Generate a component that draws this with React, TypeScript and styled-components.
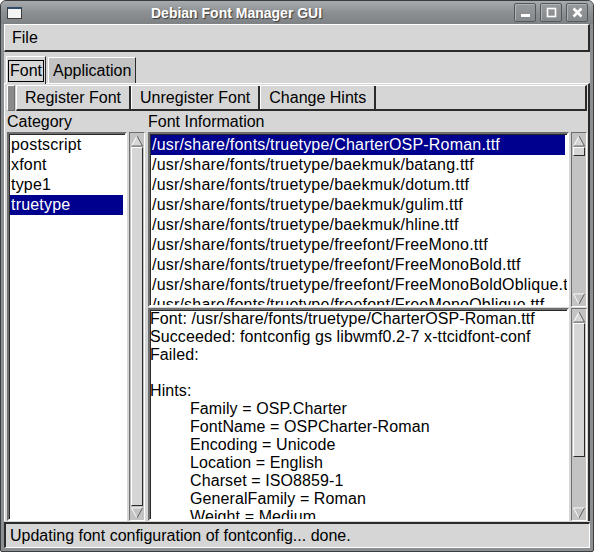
import React from "react";
import styled, { createGlobalStyle } from "styled-components";

const GlobalStyle = createGlobalStyle`
  html, body {
    margin: 0;
    padding: 0;
    background: #ffffff;
  }
  * {
    box-sizing: border-box;
  }
`;

const BG = "#d6d6d6";
const TROUGH = "#c3c3c3";
const SELECT = "#00008f";
const LIGHT = "#ffffff";
const DARK = "#6e6e6e";
const BLACK = "#2a2a2a";

const categories = ["postscript", "xfont", "type1", "truetype"];

const fonts = [
  "/usr/share/fonts/truetype/CharterOSP-Roman.ttf",
  "/usr/share/fonts/truetype/baekmuk/batang.ttf",
  "/usr/share/fonts/truetype/baekmuk/dotum.ttf",
  "/usr/share/fonts/truetype/baekmuk/gulim.ttf",
  "/usr/share/fonts/truetype/baekmuk/hline.ttf",
  "/usr/share/fonts/truetype/freefont/FreeMono.ttf",
  "/usr/share/fonts/truetype/freefont/FreeMonoBold.ttf",
  "/usr/share/fonts/truetype/freefont/FreeMonoBoldOblique.ttf",
  "/usr/share/fonts/truetype/freefont/FreeMonoOblique.ttf",
];

const infoLines: { text: string; indent?: boolean }[] = [
  { text: "Font: /usr/share/fonts/truetype/CharterOSP-Roman.ttf" },
  { text: "Succeeded: fontconfig gs libwmf0.2-7 x-ttcidfont-conf" },
  { text: "Failed:" },
  { text: "" },
  { text: "Hints:" },
  { text: "Family = OSP.Charter", indent: true },
  { text: "FontName = OSPCharter-Roman", indent: true },
  { text: "Encoding = Unicode", indent: true },
  { text: "Location = English", indent: true },
  { text: "Charset = ISO8859-1", indent: true },
  { text: "GeneralFamily = Roman", indent: true },
  { text: "Weight = Medium", indent: true },
];

export default function App() {
  return (
    <>
      <GlobalStyle />
      <Window>
        <TitleBar>
          <WinIcon />
          <Title>Debian Font Manager GUI</Title>
          <TitleButtons>
            <TitleButton>
              <svg width="11" height="11" viewBox="0 0 11 11">
                <rect x="1" y="7" width="9" height="3" fill="#fff" />
              </svg>
            </TitleButton>
            <TitleButton>
              <svg width="11" height="11" viewBox="0 0 11 11">
                <rect x="1.5" y="1.5" width="8" height="8" fill="none" stroke="#fff" strokeWidth="1.6" />
              </svg>
            </TitleButton>
            <TitleButton>
              <svg width="11" height="11" viewBox="0 0 11 11">
                <path d="M1.5 1.5 L9.5 9.5 M9.5 1.5 L1.5 9.5" stroke="#fff" strokeWidth="2.6" />
              </svg>
            </TitleButton>
          </TitleButtons>
        </TitleBar>

        <Client>
          <MenuBar>
            <MenuItem>File</MenuItem>
          </MenuBar>

          <TabRow>
            <Tab $active>
              <TabFocus>Font</TabFocus>
            </Tab>
            <Tab>Application</Tab>
          </TabRow>

          <Panel>
            <Toolbar>
              <Handle />
              <ToolFrame>
                <ToolButton>Register Font</ToolButton>
                <ToolButton>Unregister Font</ToolButton>
                <ToolButton>Change Hints</ToolButton>
              </ToolFrame>
            </Toolbar>

            <Columns>
              <CategoryCol>
                <Label>Category</Label>
                <ListBox>
                  {categories.map((c) => (
                    <Row key={c} $selected={c === "truetype"}>
                      {c}
                    </Row>
                  ))}
                </ListBox>
              </CategoryCol>

              <ScrollCol>
                <Label>&nbsp;</Label>
                <ScrollFill>
                  <Scrollbar before={0} thumb={360} after={0} />
                </ScrollFill>
              </ScrollCol>

              <InfoCol>
                <Label>Font Information</Label>
                <ListPane>
                  <ListBox>
                    {fonts.map((f, i) => (
                      <Row key={f} $selected={i === 0}>
                        {f}
                      </Row>
                    ))}
                  </ListBox>
                  <Scrollbar before={0} thumb={7} after={140} />
                </ListPane>
                <TextPane>
                  <TextBox>
                    {infoLines.map((l, i) => (
                      <TextLine key={i} $indent={l.indent}>
                        {l.text || "\u00a0"}
                      </TextLine>
                    ))}
                  </TextBox>
                  <Scrollbar before={0} thumb={133} after={50} />
                </TextPane>
              </InfoCol>
            </Columns>
          </Panel>

          <StatusBar>Updating font configuration of fontconfig... done.</StatusBar>
        </Client>
      </Window>
    </>
  );
}

function Scrollbar({ before, thumb, after }: { before: number; thumb: number; after: number }) {
  return (
    <ScrollTrack>
      <Arrow>
        <svg width="13" height="12" viewBox="0 0 13 12">
          <path d="M6.5 0.5 L0.5 11.5 L12.5 11.5 Z" fill={BG} />
          <path d="M6.5 0.5 L0.5 11.5" stroke="#fff" fill="none" />
          <path d="M6.5 0.5 L12.5 11.5 M0.5 11.5 L12.5 11.5" stroke="#555" fill="none" />
        </svg>
      </Arrow>
      <Trough>
        <Gap $size={before} />
        <Thumb $size={thumb} />
        <Gap $size={after} />
      </Trough>
      <Arrow>
        <svg width="13" height="12" viewBox="0 0 13 12">
          <path d="M0.5 0.5 L12.5 0.5 L6.5 11.5 Z" fill={TROUGH} />
          <path d="M0.5 0.5 L12.5 0.5 M0.5 0.5 L6.5 11.5" stroke="#fff" fill="none" />
          <path d="M12.5 0.5 L6.5 11.5" stroke="#555" fill="none" />
        </svg>
      </Arrow>
    </ScrollTrack>
  );
}

const Window = styled.div`
  width: 594px;
  height: 552px;
  display: flex;
  flex-direction: column;
  background: #8c8f92;
  border: 1px solid #3a3c3e;
  border-radius: 6px 6px 2px 2px;
  overflow: hidden;
  font-family: "Liberation Sans", Arial, sans-serif;
  font-size: 16px;
  color: #000;
`;

const TitleBar = styled.div`
  height: 23px;
  display: flex;
  align-items: center;
  padding: 0 5px 0 6px;
  background: linear-gradient(#a8abae, #8d9093 50%, #7f8285);
`;

const WinIcon = styled.div`
  width: 15px;
  height: 12px;
  background: #f4f4f4;
  border: 1px solid #3c3c3c;
  border-top: 2px solid #2f4a6a;
`;

const Title = styled.div`
  flex: 1;
  padding-left: 129px;
  font-family: "Liberation Sans", Arial, sans-serif;
  font-weight: bold;
  font-size: 14px;
  color: #ffffff;
  text-shadow: 1px 1px 1px #3a3a3a;
`;

const TitleButtons = styled.div`
  display: flex;
  gap: 4px;
`;

const TitleButton = styled.div`
  width: 22px;
  height: 19px;
  display: flex;
  align-items: center;
  justify-content: center;
  border: 1px solid #55585b;
  border-radius: 2px;
  box-shadow: inset 1px 1px 0 #b0b3b6;
  background: linear-gradient(#979a9d, #86898c);
`;

const Client = styled.div`
  flex: 1;
  display: flex;
  flex-direction: column;
  background: ${BG};
  margin: 0 3px 3px;
  min-height: 0;
`;

const MenuBar = styled.div`
  height: 28px;
  display: flex;
  align-items: center;
  padding-left: 7px;
  border-top: 1px solid ${LIGHT};
  border-left: 1px solid ${LIGHT};
  border-bottom: 2px solid ${BLACK};
  border-right: 2px solid ${BLACK};
`;

const MenuItem = styled.span`
  padding-top: 1px;
`;

const TabRow = styled.div`
  display: flex;
  padding: 2px 0 0 2px;
  gap: 2px;
  height: 31px;
  align-items: flex-end;
`;

const Tab = styled.div<{ $active?: boolean }>`
  height: ${(p) => (p.$active ? "28px" : "26px")};
  display: flex;
  align-items: center;
  padding: 0 ${(p) => (p.$active ? "1px" : "4px")};
  background: ${(p) => (p.$active ? BG : TROUGH)};
  border-top: 1px solid ${LIGHT};
  border-left: 1px solid ${LIGHT};
  border-right: 1px solid ${BLACK};
  margin-bottom: ${(p) => (p.$active ? "-1px" : "0")};
  position: relative;
  z-index: ${(p) => (p.$active ? 1 : 0)};
`;

const TabFocus = styled.span`
  border: 1px solid #000;
  padding: 0 1px;
  line-height: 20px;
`;

const Panel = styled.div`
  flex: 1;
  display: flex;
  flex-direction: column;
  border-top: 1px solid ${LIGHT};
  border-left: 1px solid ${LIGHT};
  border-right: 2px solid ${BLACK};
  padding: 1px 0 0 2px;
  min-height: 0;
`;

const Toolbar = styled.div`
  display: flex;
  height: 26px;
  margin-right: 1px;
`;

const Handle = styled.div`
  width: 8px;
  margin-right: 1px;
  border-top: 1px solid ${LIGHT};
  border-left: 1px solid ${LIGHT};
  border-bottom: 1px solid ${DARK};
  border-right: 1px solid ${DARK};
  background-image: radial-gradient(#8a8a8a 0.8px, transparent 1px);
  background-size: 2px 2px;
`;

const ToolFrame = styled.div`
  flex: 1;
  display: flex;
  border-top: 1px solid ${LIGHT};
  border-left: 1px solid ${LIGHT};
  border-bottom: 2px solid ${BLACK};
  border-right: 2px solid ${BLACK};
`;

const ToolButton = styled.div`
  display: flex;
  align-items: center;
  padding: 0 8px 0 8px;
  border-right: 2px solid ${BLACK};
  border-left: 1px solid ${LIGHT};
  &:first-child {
    border-left: none;
  }
`;

const Columns = styled.div`
  flex: 1;
  display: flex;
  min-height: 0;
  margin-top: 1px;
`;

const Label = styled.div`
  height: 20px;
  line-height: 19px;
  flex-shrink: 0;
`;

const CategoryCol = styled.div`
  width: 120px;
  display: flex;
  flex-direction: column;
`;

const ScrollCol = styled.div`
  width: 21px;
  display: flex;
  flex-direction: column;
  padding-left: 2px;
  padding-right: 1px;
`;

const ScrollFill = styled.div`
  flex: 1;
  display: flex;
  min-height: 0;
`;

const InfoCol = styled.div`
  flex: 1;
  display: flex;
  flex-direction: column;
  min-width: 0;
  padding-right: 1px;
`;

const ListBox = styled.div`
  flex: 1;
  background: #ffffff;
  border-top: 2px solid ${DARK};
  border-left: 2px solid ${DARK};
  border-bottom: 2px solid ${LIGHT};
  border-right: 2px solid ${LIGHT};
  box-shadow: inset 1px 1px 0 ${BLACK};
  padding: 1px 1px 0 1px;
  overflow: hidden;
  min-width: 0;
`;

const Row = styled.div<{ $selected?: boolean }>`
  height: 20px;
  line-height: 19px;
  padding-left: 1px;
  white-space: nowrap;
  letter-spacing: 0.2px;
  background: ${(p) => (p.$selected ? SELECT : "transparent")};
  color: ${(p) => (p.$selected ? "#ffffff" : "#000")};
  margin-right: ${(p) => (p.$selected ? "1px" : "0")};
`;

const ListPane = styled.div`
  height: 175px;
  display: flex;
  flex-shrink: 0;
  gap: 2px;
`;

const TextPane = styled.div`
  flex: 1;
  display: flex;
  gap: 2px;
  margin-top: 1px;
  min-height: 0;
`;

const TextBox = styled.div`
  flex: 1;
  min-width: 0;
  background: #ffffff;
  border-top: 2px solid ${DARK};
  border-left: 2px solid ${DARK};
  border-bottom: 2px solid ${LIGHT};
  border-right: 2px solid ${LIGHT};
  box-shadow: inset 1px 1px 0 ${BLACK};
  padding: 0 0 0 0;
  overflow: hidden;
`;

const TextLine = styled.div<{ $indent?: boolean }>`
  height: 18px;
  line-height: 18px;
  white-space: nowrap;
  letter-spacing: 0.1px;
  padding-left: ${(p) => (p.$indent ? "40px" : "0")};
`;

const ScrollTrack = styled.div`
  width: 16px;
  flex: 0 0 16px;
  align-self: stretch;
  display: flex;
  flex-direction: column;
  background: ${TROUGH};
  border-top: 1px solid ${DARK};
  border-left: 1px solid ${DARK};
  border-bottom: 1px solid ${LIGHT};
  border-right: 1px solid ${LIGHT};
  padding: 1px;
`;

const Arrow = styled.div`
  height: 13px;
  display: flex;
  align-items: center;
  justify-content: center;
  flex-shrink: 0;
`;

const Trough = styled.div`
  flex: 1;
  display: flex;
  flex-direction: column;
  min-height: 0;
`;

const Gap = styled.div<{ $size: number }>`
  flex: ${(p) => p.$size} 1 0;
`;

const Thumb = styled.div<{ $size: number }>`
  flex: ${(p) => p.$size} 1 0;
  background: ${BG};
  border-top: 1px solid ${LIGHT};
  border-left: 1px solid ${LIGHT};
  border-bottom: 1px solid ${BLACK};
  border-right: 1px solid ${BLACK};
`;

const StatusBar = styled.div`
  height: 26px;
  display: flex;
  align-items: center;
  padding-left: 4px;
  margin-top: 1px;
  border-top: 2px solid ${BLACK};
  border-left: 2px solid ${BLACK};
  border-bottom: 1px solid ${LIGHT};
  border-right: 1px solid ${LIGHT};
`;
